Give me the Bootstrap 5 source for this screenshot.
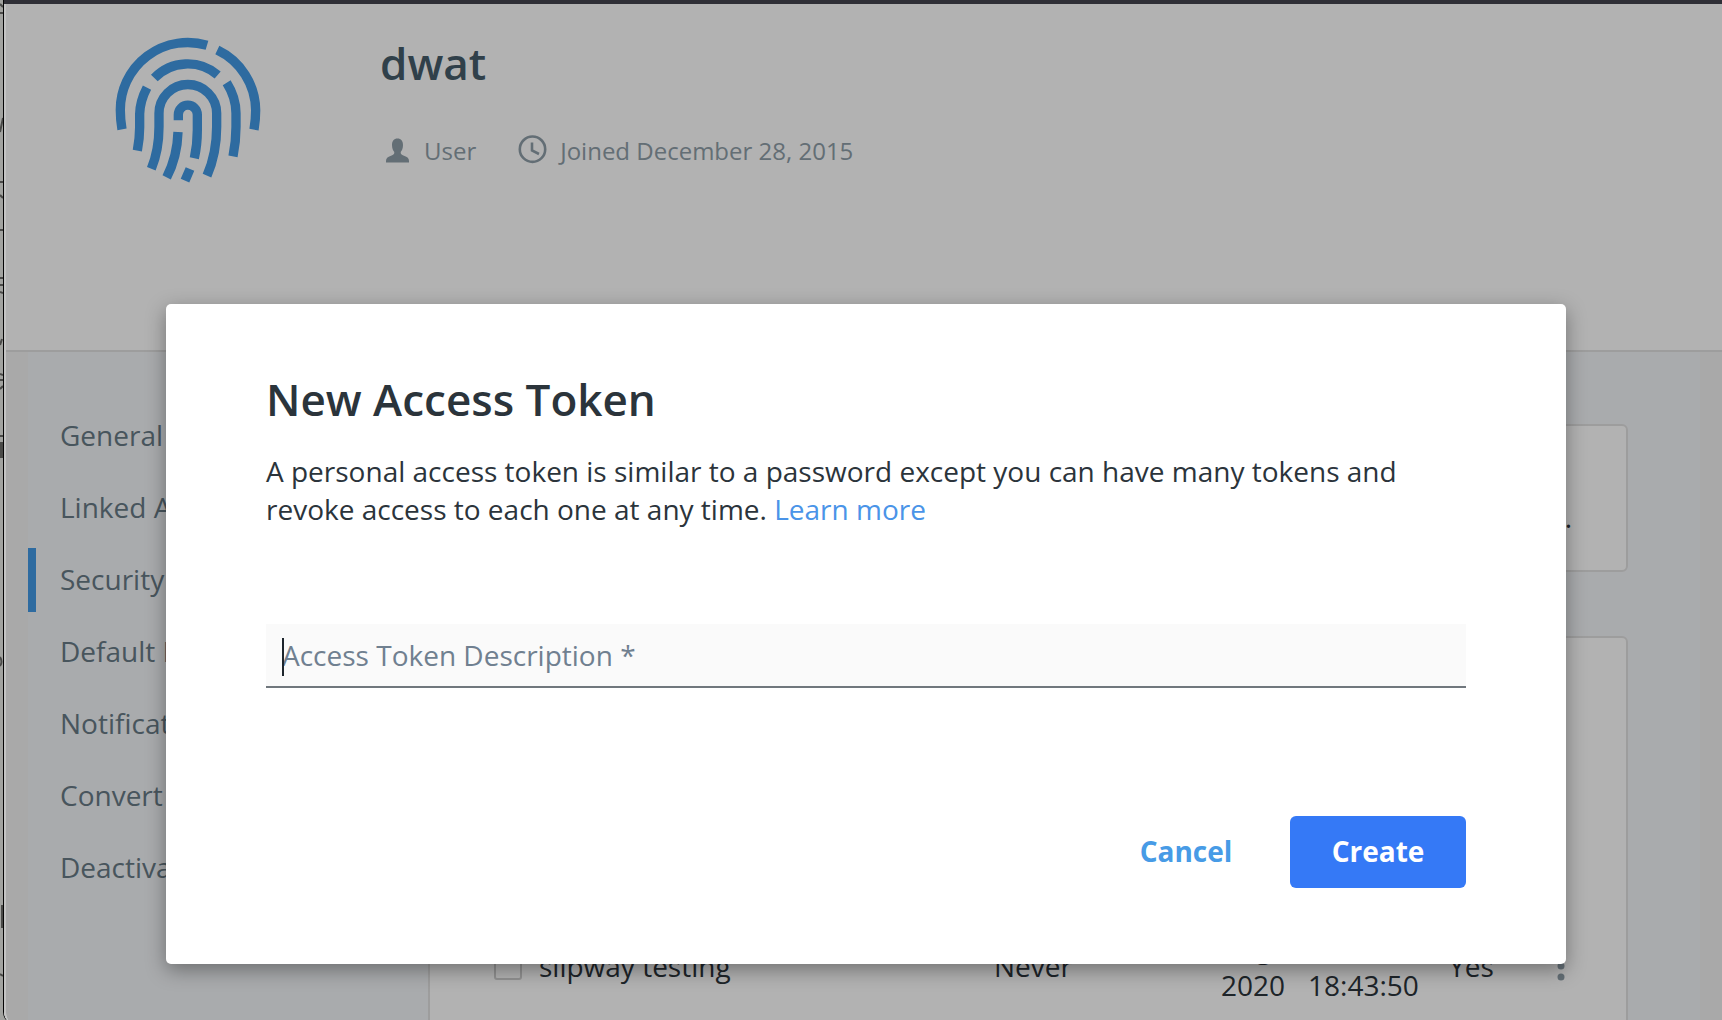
<!DOCTYPE html>
<html lang="en">
<head>
<meta charset="utf-8">
<meta name="viewport" content="width=device-width, initial-scale=1">
<title>Account settings - New Access Token</title>
<link href="https://cdn.jsdelivr.net/npm/bootstrap@5.3.0/dist/css/bootstrap.min.css" rel="stylesheet">
<style>
  body { font-family: "Open Sans", "Noto Sans", sans-serif; font-size: 28px; line-height: 38px; color: #2b343b; background: #a2a3a0; }
  .desk { height: 100vh; }
  .desk-edge { width: 3px; flex: none; }
  .app-window { height: calc(100vh + 4px); border-left: 1px solid #050505; border-bottom-left-radius: 12px; background: #fafafa; }
  .window-bar { height: 4px; background: #2f2f36; }
  .screen { border-left: 2px solid #c4c4c4; border-bottom-left-radius: 11px; }
  .profile { min-height: 348px; padding: 31px 110px 0; gap: 120px; background: #fff; border-bottom: 2px solid #e1e1e1; }
  .profile-name { font-size: 44px; line-height: 56px; font-weight: 600; color: #455c6a; margin-bottom: 43px; }
  .profile-meta { font-size: 24px; line-height: 34px; color: #8f9ea8; gap: 42px; }
  .meta-item { gap: 14px; }
  .page-area { background: #f3f3f3; padding: 0 22px; }
  .page-inner { background: #f3f5f8; padding-right: 72px; }
  .side-nav { width: 400px; padding-top: 52px; gap: 8px; }
  .side-nav .nav-link { height: 64px; padding: 12px 0 12px 24px; border-left: 8px solid transparent; color: #677a86; }
  .side-nav .nav-link.active { border-left-color: #439ae5; }
  .panels { padding-top: 72px; gap: 64px; min-width: 0; }
  .panel { border: 2px solid #e1e1e1; border-radius: 6px; background: #fff; color: #2b343b; }
  .panel-auth { height: 148px; padding: 0 54px 34px; }
  .panel-tokens { min-height: 440px; padding: 32px 40px 0 64px; }
  .token-table { table-layout: fixed; margin-top: 152px; }
  .token-table th, .token-table td { padding: 0; border: 0; text-align: left; }
  .token-table thead th { height: 106px; }
  .token-table tbody td { height: 76px; }
  .token-check { width: 28px; height: 28px; margin: 0; display: block; border: 2px solid #d0d0d0; }
  .token-check.form-check-input { border-radius: 3px; }
  .kebab { width: 12px; height: 36px; padding: 0; border: 0; background: none; display: block; }
  .shade { background: rgba(0, 0, 0, .3); }
  .token-dialog { max-width: 1400px; margin: 300px auto 0; }
  .token-dialog .modal-content { border: 0; border-radius: 5px; padding: 64px 100px 76px; color: #2b343b; box-shadow: 0 6px 20px rgba(0, 0, 0, .36); }
  .dialog-title { font-size: 44px; line-height: 62px; font-weight: 600; margin-bottom: 22px; }
  .dialog-text { margin-bottom: 96px; }
  .dialog-text a { color: #4a94e8; text-decoration: none; }
  .token-field { margin-bottom: 128px; }
  .token-field .form-control { height: 64px; padding: 0 16px; font-size: 28px; border: 0; border-bottom: 2px solid #70777d; border-radius: 0; background: #fafafa; box-shadow: none; caret-color: transparent; }
  .token-field .form-control::placeholder { color: #708090; }
  .text-caret { left: 16px; top: 14px; width: 2px; height: 38px; background: #1d252c; }
  .dialog-actions { gap: 16px; }
  .dialog-actions .btn { min-width: 176px; height: 72px; padding: 0 40px 2px; font-size: 28px; font-weight: 700; border: 0; border-radius: 6px; }
  .btn-cancel { color: #479be6; }
  .btn-create, .btn-create:hover { color: #fff; background: #3579f6; }
</style>
<script src="https://cdn.jsdelivr.net/npm/bootstrap@5.3.0/dist/js/bootstrap.bundle.min.js" defer></script>
</head>
<body>
<div class="desk d-flex overflow-hidden">
  <!-- sliver of the window behind -->
  <svg class="desk-edge" viewBox="0 0 3 1020" width="3" height="1020" preserveAspectRatio="xMinYMin slice" fill="none" stroke="#4a4a48" stroke-width="2" aria-hidden="true">
    <path d="M0 4L3 7M0 13H3M0 132L3 118M0 182H3M0 195L3 198M0 230H3M0 278H3M0 285H3M0 292L3 293M0 345L2 339M0 374L3 375M0 380H3M0 389L3 386M0 436H3M0 657Q3 662 0 666M2 905V928M0 974L3 976"/>
    <path d="M0 442H3V458H0z" fill="#4a4a48" stroke="none"/>
  </svg>
  <div class="app-window flex-grow-1 d-flex flex-column overflow-hidden">
    <div class="window-bar"></div>
    <div class="screen position-relative flex-grow-1 d-flex flex-column overflow-hidden">
      <header class="profile d-flex align-items-start">
        <svg class="overflow-visible" width="144" height="148" viewBox="48 45 432 444" fill="none" stroke="#439ae5" stroke-width="28" role="img" aria-label="Profile picture">
          <path d="M66 328Q61 300 61 271A202 202 0 0 1 321 76M352 90A202 202 0 0 1 467 271Q467 300 462 329"/>
          <path d="M163 174A139 139 0 0 1 353 165"/>
          <path d="M141 203Q120 243 119 282V322Q119 355 112 392M380 188Q408 232 408 280V320Q408 365 399 409"/>
          <path d="M154 446Q177 390 177 320V280A86 86 0 0 1 350 280V320Q350 400 321 467"/>
          <path d="M235 301V284A28 28 0 0 1 292 284V330Q292 375 283 415M234 336Q232 410 200 472M270 447L255 482"/>
        </svg>
        <div>
          <h1 class="profile-name">dwat</h1>
          <div class="profile-meta d-flex">
            <span class="meta-item d-flex align-items-center">
              <svg width="30" height="28" viewBox="0 0 30 28" fill="#8f9ea8" aria-hidden="true"><path d="M17.500 1.500c3.600 0 5.500 2.500 5.500 6.500 0 3.500-1 5.500-2.300 7 0 2.300.6 2.700 3.300 3.700 3.500 1.200 5 2.400 5 5.300v1.500H6V24c0-2.900 1.500-4.100 5-5.300 2.700-1 3.300-1.400 3.300-3.700C13 13.500 12 11.500 12 8c0-4 1.900-6.500 5.500-6.500z"/></svg>User
            </span>
            <span class="meta-item d-flex align-items-center">
              <svg class="overflow-visible" width="28" height="30" viewBox="0 0 28 30" fill="none" stroke="#8f9ea8" stroke-width="2.600" aria-hidden="true"><circle cx="14.500" cy="13.200" r="12.700"/><path d="M14 6.500V14.500L21 18"/></svg>Joined December 28, 2015
            </span>
          </div>
        </div>
      </header>
      <div class="page-area flex-grow-1 d-flex">
        <div class="page-inner flex-grow-1 d-flex">
          <nav class="side-nav nav flex-column flex-nowrap flex-shrink-0" aria-label="Settings">
            <a class="nav-link" href="#">General</a>
            <a class="nav-link" href="#">Linked Accounts</a>
            <a class="nav-link active" href="#">Security</a>
            <a class="nav-link" href="#">Default Privacy</a>
            <a class="nav-link" href="#">Notifications</a>
            <a class="nav-link" href="#">Convert</a>
            <a class="nav-link" href="#">Deactivate</a>
          </nav>
          <main class="panels flex-grow-1 d-flex flex-column">
            <section class="panel panel-auth d-flex align-items-end justify-content-end" aria-label="Two-factor authentication">
              <p class="mb-0">Disabled.</p>
            </section>
            <section class="panel panel-tokens flex-grow-1" aria-label="Access tokens">
              <table class="token-table w-100">
                <colgroup><col style="width:45px"><col style="width:455px"><col style="width:227px"><col style="width:87px"><col style="width:141px"><col><col style="width:30px"></colgroup>
                <thead><tr><th></th><th></th><th></th><th></th><th></th><th></th><th></th></tr></thead>
                <tbody>
                  <tr>
                    <td><input class="token-check form-check-input" type="checkbox" aria-label="Select slipway testing"></td>
                    <td>slipway testing</td>
                    <td>Never</td>
                    <td>Aug<br>2020</td>
                    <td><br>18:43:50</td>
                    <td>Yes</td>
                    <td><button class="kebab" type="button" aria-label="Token actions"><svg class="d-block" width="12" height="36" viewBox="0 0 12 36" fill="#8f9ea8"><circle cx="5" cy="7" r="3.500"/><circle cx="5" cy="18" r="3.500"/><circle cx="5" cy="29" r="3.500"/></svg></button></td>
                  </tr>
                </tbody>
              </table>
            </section>
          </main>
        </div>
      </div>
      <div class="shade modal position-absolute d-block ps-1 overflow-hidden" role="dialog" aria-modal="true" aria-labelledby="dialogTitle">
        <div class="token-dialog modal-dialog">
          <form class="modal-content">
            <h2 class="dialog-title" id="dialogTitle">New Access Token</h2>
            <p class="dialog-text">A personal access token is similar to a password except you can have many tokens and revoke access to each one at any time. <a href="#">Learn more</a></p>
            <div class="token-field position-relative">
              <label class="visually-hidden" for="tokenDescription">Access Token Description</label>
              <input class="form-control" id="tokenDescription" type="text" placeholder="Access Token Description *" required>
              <span class="text-caret position-absolute"></span>
            </div>
            <div class="dialog-actions d-flex justify-content-end">
              <button class="btn btn-cancel" type="button">Cancel</button>
              <button class="btn btn-create" type="button">Create</button>
            </div>
          </form>
        </div>
      </div>
    </div>
  </div>
</div>
</body>
</html>
